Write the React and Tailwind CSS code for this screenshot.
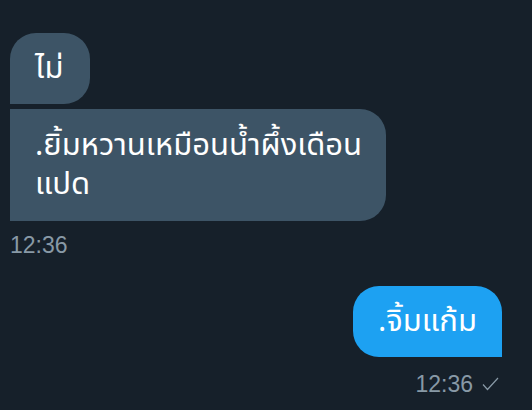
import React from 'react';

const thai = { fontFamily: '"Noto Sans Thai", "Noto Sans", "DejaVu Sans", sans-serif' };
const stamp = { fontFamily: '"Liberation Sans", Arial, sans-serif' };

export default function App() {
  return (
    <div className="w-[532px] h-[410px] bg-[#16202a] overflow-hidden" style={thai}>
      <div className="flex flex-col pl-[10px] pr-[30px] pt-[33px]">
        {/* Incoming messages */}
        <div className="flex flex-col items-start gap-[5px]">
          <div className="bg-[#3d5466] text-white text-[31px] leading-[39px] pl-[25px] pr-[27px] py-4 rounded-[26px] rounded-bl-none">
            ไม่
          </div>
          <div className="bg-[#3d5466] text-white text-[31px] leading-[39px] pl-[25px] pr-[20px] py-[17px] rounded-r-[26px] w-[376px]">
            .ยิ้มหวานเหมือนน้ำผึ้งเดือน<br />แปด
          </div>
        </div>
        <div className="mt-[10px] text-[23px] leading-[28px] text-[#8899a6]" style={stamp}>
          12:36
        </div>

        {/* Outgoing message */}
        <div className="flex flex-col items-end mt-[27px]">
          <div className="bg-[#1da1f2] text-white text-[31px] leading-[39px] px-[25px] py-4 rounded-[26px] rounded-br-none">
            .จิ้มแก้ม
          </div>
          <div className="mt-[13px] flex items-center gap-[9px] text-[23px] leading-[28px] text-[#8899a6]" style={stamp}>
            <span>12:36</span>
            <svg width="17" height="14" viewBox="0 0 17 14" fill="none" stroke="#8899a6" strokeWidth="1.2" className="mr-[3px]">
              <path d="M1 7.5 L5.5 12.5 L16 1" />
            </svg>
          </div>
        </div>
      </div>
    </div>
  );
}
